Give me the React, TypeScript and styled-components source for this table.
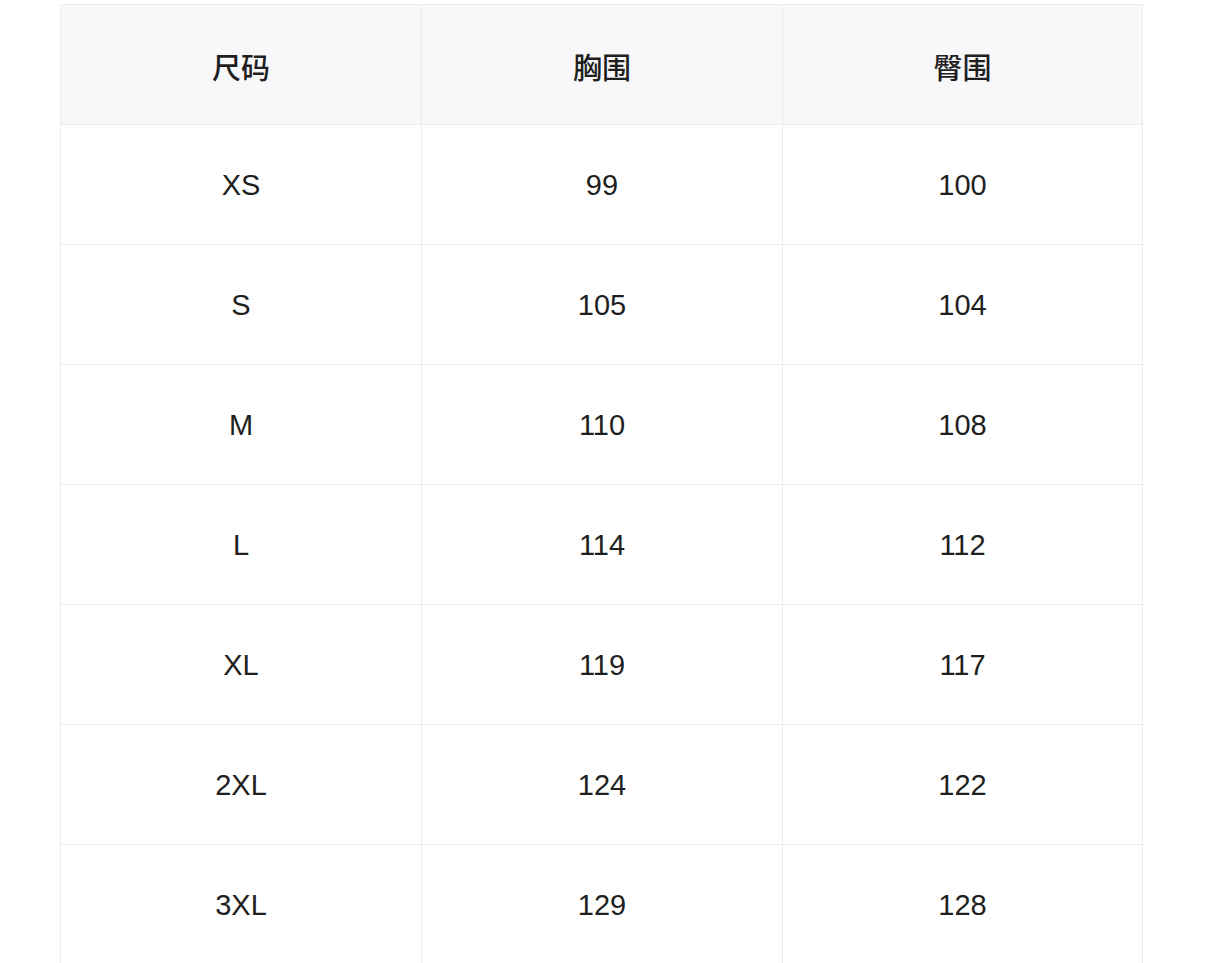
import styled, { createGlobalStyle } from "styled-components";

const GlobalStyle = createGlobalStyle`
    body {
        margin: 0;
        background: #ffffff;
        font-family: "Liberation Sans", "Noto Sans CJK SC", sans-serif;
    }
`;

const Page = styled.div`
    padding: 4px 0 0 60px;
`;

const Table = styled.div`
    width: 1082px;
    display: grid;
    grid-template-columns: 361px 361px 1fr;
    border-top: 1px solid #ececee;
    border-left: 1px solid #ececee;
`;

const Cell = styled.div<{ $head?: boolean }>`
    height: 120px;
    box-sizing: border-box;
    padding-top: 2px;
    display: flex;
    align-items: center;
    justify-content: center;
    border-right: 1px solid #ececee;
    border-bottom: 1px solid #ececee;
    background: ${(p) => (p.$head ? "#f8f8fa" : "#ffffff")};
    color: #1f1f1f;
    font-size: 29px;
    font-weight: ${(p) => (p.$head ? 500 : 400)};
    font-family: ${(p) =>
        p.$head
            ? `"Noto Sans CJK SC", sans-serif`
            : `"Liberation Sans", "Noto Sans CJK SC", sans-serif`};
`;

const headers = ["尺码", "胸围", "臀围"];

const rows = [
    ["XS", "99", "100"],
    ["S", "105", "104"],
    ["M", "110", "108"],
    ["L", "114", "112"],
    ["XL", "119", "117"],
    ["2XL", "124", "122"],
    ["3XL", "129", "128"],
];

export default function App() {
    return (
        <Page>
            <GlobalStyle />
            <Table>
                {headers.map((h) => (
                    <Cell key={h} $head>
                        {h}
                    </Cell>
                ))}
                {rows.map((r) =>
                    r.map((v, i) => <Cell key={r[0] + i}>{v}</Cell>)
                )}
            </Table>
        </Page>
    );
}
